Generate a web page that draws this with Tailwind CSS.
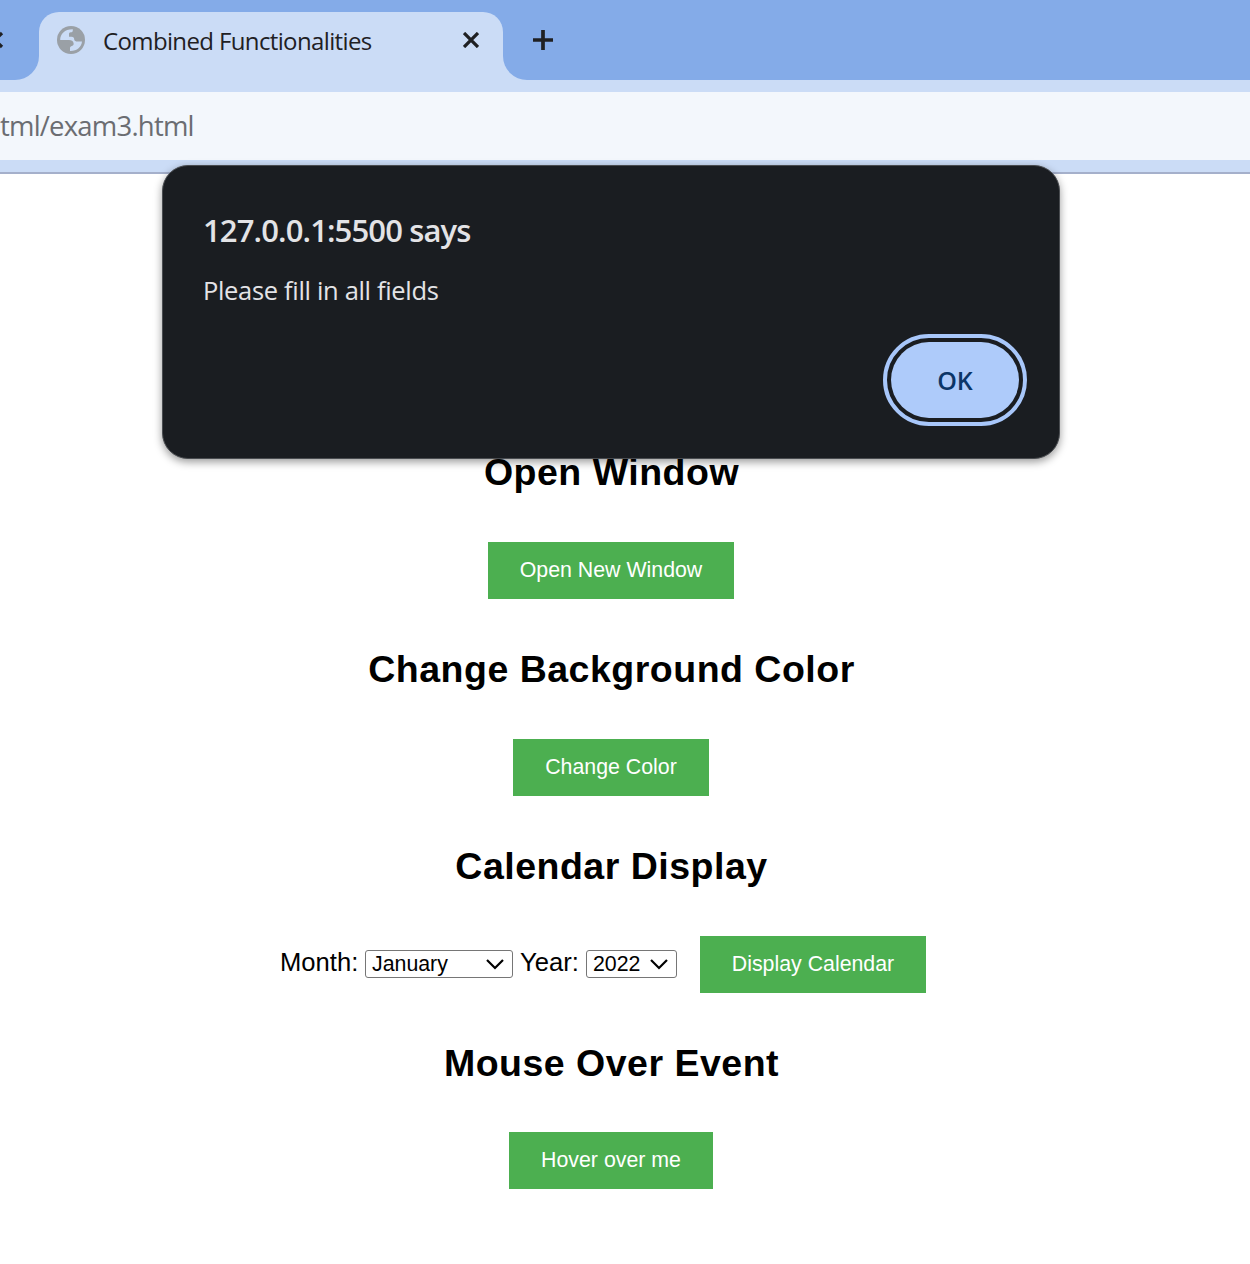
<!DOCTYPE html>
<html lang="en">
<head>
<meta charset="utf-8">
<title>Combined Functionalities</title>
<script src="https://cdn.jsdelivr.net/npm/@tailwindcss/browser@4"></script>
</head>
<body class="relative h-[1264px] w-[1250px] overflow-hidden bg-white font-['Liberation_Sans',Arial,sans-serif] text-black">
<header class="flex h-[174px] flex-col border-b-2 border-[#a5b0cb] bg-[#cbdcf6] font-['Open_Sans','Noto_Sans',sans-serif]">
  <div class="flex h-20 bg-[#cbdcf6]">
    <div class="h-20 w-[39px] rounded-br-[24px] bg-[#84abe8]">
      <svg class="h-20 w-[39px]" viewBox="0 0 39 80" fill="none" stroke="#1f2023" stroke-width="3.200"><path d="M-12 33L2 47M-12 47L2 33"/></svg>
    </div>
    <div class="h-20 w-[464px] bg-[#84abe8]">
      <div class="mt-3 flex h-[68px] items-start rounded-t-[20px] bg-[#cbdcf6] pl-[18px]">
        <svg class="mt-[14px] h-7 w-7" viewBox="0 0 28 28"><circle cx="14" cy="14" r="14" fill="#9aa0a6"/><path d="M3.200 14C3 8 8 3 15.800 3.200V4.500C15.800 5.800 15 6.300 13.800 6.300C12.500 6.300 12 7 12 8.200V10.700H14.500C16.500 10.700 17.200 11.700 17.200 13.500C17.500 15 18.800 15.500 20.500 15.500H25C24.500 21 20 25.200 13 25V22C13 20.800 13.800 20.300 15 20C16.300 19.600 16.800 18.800 16.600 17.300C16.300 15 14.500 14 12 14Z" fill="#cbdcf6"/></svg>
        <span class="ml-[18px] mt-[11px] w-[360px] whitespace-nowrap text-[24px] leading-9 tracking-[-0.63px] text-[#1f2023]">Combined Functionalities</span>
        <svg class="mt-[20px] h-4 w-4" viewBox="0 0 16 16" fill="none" stroke="#1f2023" stroke-width="3.300"><path d="M1 1L15 15M1 15L15 1"/></svg>
      </div>
    </div>
    <div class="h-20 flex-1 rounded-bl-[24px] bg-[#84abe8] pl-[30px] pt-[30px]">
      <svg class="h-5 w-5" viewBox="0 0 20 20" fill="none" stroke="#1f2023" stroke-width="3.700"><path d="M0 10H20M10 0V20"/></svg>
    </div>
  </div>
  <div class="mt-3 flex h-[68px] items-center bg-[#f3f7fc]"><span class="whitespace-nowrap text-[27.5px] tracking-[-0.8px] text-[#6b6d72]">tml/exam3.html</span></div>
</header>
<main class="flex w-[1222px] flex-col items-center pt-[276px] text-[25.6px]">
  <h2 class="h-[92px] pl-px text-[37.5px] font-bold leading-[44px] tracking-[0.5px]">Open Window</h2>
  <button class="h-[57px] w-[246px] bg-[#4caf50] text-[21.33px] text-white">Open New Window</button>
  <h2 class="mt-[48px] h-[92px] pl-px text-[37.5px] font-bold leading-[44px] tracking-[0.5px]">Change Background Color</h2>
  <button class="h-[57px] w-[196px] bg-[#4caf50] text-[21.33px] text-white">Change Color</button>
  <h2 class="mt-[48px] h-[92px] pl-px text-[37.5px] font-bold leading-[44px] tracking-[0.5px]">Calendar Display</h2>
  <div class="flex h-[57px] w-[662px] items-start">
    <label class="w-[85px] whitespace-nowrap pt-[7px]">Month:</label>
    <div class="mt-[14px] flex h-7 w-[148px] items-center justify-between rounded-[3px] border border-[#767676] pl-1.5 pr-2 text-[21.33px] leading-6"><span>January</span><svg class="h-5 w-[18px]" viewBox="0 0 18 20" fill="none" stroke="#000" stroke-width="2.200"><path d="M1 6L9 14L17 6"/></svg></div>
    <label class="ml-[7px] w-[66px] whitespace-nowrap pt-[7px]">Year:</label>
    <div class="mt-[14px] flex h-7 w-[91px] items-center justify-between rounded-[3px] border border-[#767676] pl-1.5 pr-2 text-[21.33px] leading-6"><span>2022</span><svg class="h-5 w-[18px]" viewBox="0 0 18 20" fill="none" stroke="#000" stroke-width="2.200"><path d="M1 6L9 14L17 6"/></svg></div>
    <button class="ml-[23px] h-[57px] w-[226px] bg-[#4caf50] text-[21.33px] text-white">Display Calendar</button>
  </div>
  <h2 class="mt-[48px] h-[91px] pl-px text-[37.5px] font-bold leading-[44px] tracking-[0.5px]">Mouse Over Event</h2>
  <button class="h-[57px] w-[204px] bg-[#4caf50] text-[21.33px] text-white">Hover over me</button>
</main>
<div role="dialog" class="absolute left-[162px] top-[165px] flex h-[294px] w-[898px] flex-col rounded-[26px] border border-[#494c50] bg-[#1a1d21] pl-10 pr-10 font-['Open_Sans','Noto_Sans',sans-serif] text-[#e3e3e6] shadow-[0_3px_8px_rgba(0,0,0,0.4)]">
  <div class="mt-[42px] h-[44px] whitespace-nowrap text-[31px] font-semibold leading-[44px] tracking-[-0.87px]">127.0.0.1:5500 says</div>
  <div class="mt-[20px] h-9 whitespace-nowrap text-[25.5px] leading-9 tracking-[-0.33px]">Please fill in all fields</div>
  <button class="mt-[34px] h-[76px] w-[128px] shrink-0 self-end rounded-[38px] bg-[#aecbfa] pt-0.5 text-[25px] font-semibold text-[#0b3567] outline-4 outline-offset-4 outline-[#a8c7fa]">OK</button>
</div>
</body>
</html>
